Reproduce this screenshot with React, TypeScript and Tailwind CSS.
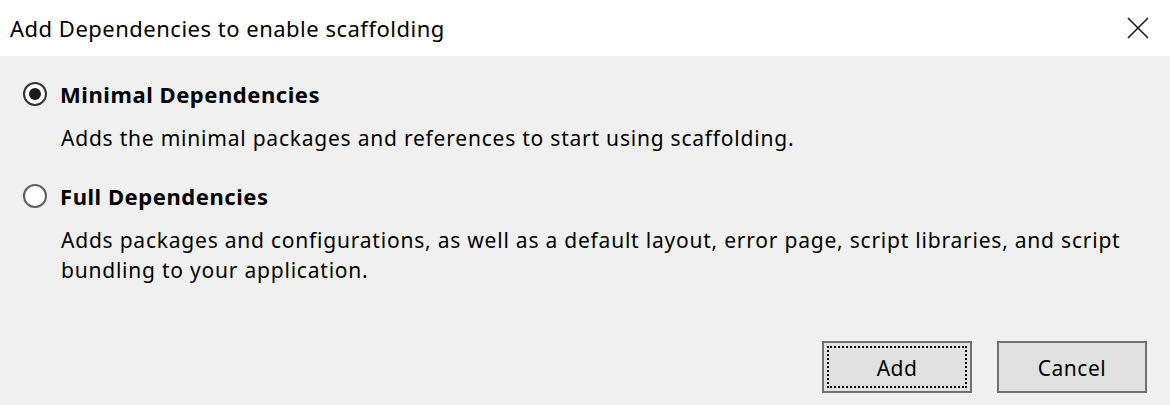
import React, { useState } from 'react';

const font = { fontFamily: '"Noto Sans", "Open Sans", sans-serif' };

const Radio = ({ checked }: { checked: boolean }) => (
  <div
    className={`flex h-[24px] w-[24px] shrink-0 items-center justify-center rounded-full border-2 bg-white ${
      checked ? 'border-[#333333]' : 'border-[#5f5f5f]'
    }`}
  >
    {checked && <div className="h-[12px] w-[12px] rounded-full bg-[#1a1a1a]" />}
  </div>
);

const Option = ({
  title,
  text,
  checked,
  onSelect,
}: {
  title: string;
  text: string;
  checked: boolean;
  onSelect: () => void;
}) => (
  <div className="flex flex-col" onClick={onSelect}>
    <div className="flex h-[30px] flex-row items-center gap-[13px] pl-[23px]">
      <Radio checked={checked} />
      <span className="text-[22px] font-bold tracking-[0.55px] text-black">{title}</span>
    </div>
    <div className="mt-[14px] pl-[61px] pr-[44px] text-[21px] leading-[30px] tracking-[0.78px] text-black">
      {text}
    </div>
  </div>
);

export default function App() {
  const [choice, setChoice] = useState<'min' | 'full'>('min');

  return (
    <div className="flex h-[405px] w-[1170px] flex-col bg-[#f0f0f0]" style={font}>
      <div className="flex h-[56px] flex-row items-center justify-between bg-white pl-[10px] pr-[18px]">
        <span className="text-[22px] tracking-[0.5px] text-black">Add Dependencies to enable scaffolding</span>
        <svg width="28" height="28" viewBox="0 0 28 28" className="text-[#1a1a1a]">
          <path d="M4 4 L24 24 M24 4 L4 24" stroke="currentColor" strokeWidth="1.6" fill="none" />
        </svg>
      </div>

      <div className="flex flex-col gap-[28px] pt-[23px]">
        <Option
          title="Minimal Dependencies"
          text="Adds the minimal packages and references to start using scaffolding."
          checked={choice === 'min'}
          onSelect={() => setChoice('min')}
        />
        <Option
          title="Full Dependencies"
          text="Adds packages and configurations, as well as a default layout, error page, script libraries, and script bundling to your application."
          checked={choice === 'full'}
          onSelect={() => setChoice('full')}
        />
      </div>

      <div className="mt-auto flex flex-row justify-end gap-[25px] pb-[12px] pr-[23px]">
        <button className="relative h-[52px] w-[150px] border-2 border-[#707070] bg-[#e1e1e1] pt-[3px] text-[21px] tracking-[0.5px] text-black">
          <span className="absolute inset-[3px] border-2 border-dotted border-black" />
          Add
        </button>
        <button className="h-[52px] w-[150px] border-2 border-[#707070] bg-[#e1e1e1] pt-[3px] text-[21px] tracking-[0.5px] text-black">
          Cancel
        </button>
      </div>
    </div>
  );
}
